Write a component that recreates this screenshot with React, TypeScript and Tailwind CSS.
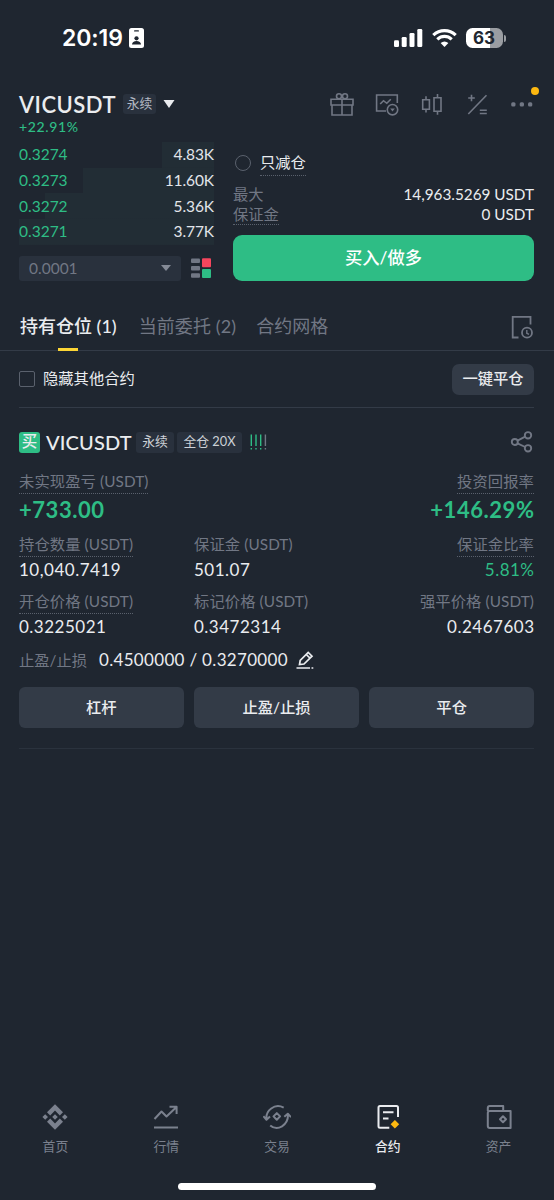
import { ReactNode } from "react";
import clsx from "clsx";

const asks = [
    { price: "0.3274", amount: "4.83K", depth: 52 },
    { price: "0.3273", amount: "11.60K", depth: 131 },
    { price: "0.3272", amount: "5.36K", depth: 169 },
    { price: "0.3271", amount: "3.77K", depth: 195 },
];

const Icon = ({ children, className = "size-6", box = "0 0 24 24" }: { children: ReactNode; className?: string; box?: string }) => (
    <svg viewBox={box} className={className} fill="none" stroke="currentColor" strokeWidth="1.6">
        {children}
    </svg>
);

const StatusBar = () => (
    <div className="flex h-[76px] items-center pl-[62px] pr-[48px] text-white">
        <div className="w-[62px] font-['Inter'] text-[23px] font-semibold leading-6 tracking-[-0.1px]">20:19</div>
        <svg viewBox="0 0 15 20" className="ml-[5px] h-5 w-[15px]">
            <rect width="15" height="20" rx="2.5" fill="#fff" />
            <rect x="5" y="2.2" width="5" height="1.4" rx="0.7" fill="#1f2630" />
            <circle cx="7.5" cy="10.3" r="2.1" fill="#1f2630" />
            <path d="M3 16.6c0-2.2 2-3.6 4.5-3.6s4.5 1.4 4.5 3.6z" fill="#1f2630" />
        </svg>
        <svg viewBox="0 0 29 18" className="ml-auto h-[18px] w-[29px]" fill="#fff">
            <rect y="11.3" width="5" height="6.7" rx="1.3" />
            <rect x="7.7" y="8" width="5" height="10" rx="1.3" />
            <rect x="15.5" y="4" width="5" height="14" rx="1.3" />
            <rect x="23.3" width="5" height="18" rx="1.3" />
        </svg>
        <svg viewBox="0 0 25 18" className="ml-[9px] h-[18px] w-[25px]" fill="none" stroke="#fff" strokeWidth="3.2">
            <path d="M1.3 6.1C7.7 0.1 17.3 0.1 23.7 6.1" />
            <path d="M5.3 10.3C9.5 6.4 15.5 6.4 19.7 10.3" />
            <path d="M12.5 18L8.6 14.1Q12.5 10.7 16.4 14.1Z" fill="#fff" stroke="none" />
        </svg>
        <div className="ml-[9px] flex h-5 w-[37px] items-center justify-center rounded-[6.5px] bg-[linear-gradient(90deg,#fff_64%,#9a9da2_64%)] font-['Inter'] text-[17px] font-bold leading-5 text-[#20262f]">
            63
        </div>
        <div className="ml-[1.5px] h-[7px] w-[2px] rounded-r-full bg-[#9a9da2]" />
    </div>
);

const HeaderIcons = () => (
    <div className="ml-auto flex gap-[21px] text-[#717784]">
        <Icon>
            <path d="M1 7.2H23V13H1ZM2 13V23H22V13M12 7V23" />
            <circle cx="9" cy="4.3" r="2.5" />
            <circle cx="15" cy="4.3" r="2.5" />
        </Icon>
        <Icon>
            <path d="M11 19H1.6V3H22.3V11M5.2 12L8.5 8.7L11.8 11.3L15.8 7.3" />
            <circle cx="17.5" cy="17.7" r="5.2" />
            <path d="M15.2 16.5H19.8L17.5 19.4Z" fill="currentColor" stroke="none" />
        </Icon>
        <Icon>
            <path d="M2.7 7.7H9.4V17.3H2.7ZM6 4.3V7.7M6 17.3V20.5M14 5.7H21V19.3H14ZM17.5 2V5.7M17.5 19.3V22.7" />
        </Icon>
        <Icon>
            <path d="M3.2 6H9.8M6.5 2.7V9.3M3.3 22L21.5 3.3M14.8 18.3H21.8M14.8 21.5H21.8" />
        </Icon>
        <div className="relative">
            <Icon>
                <g fill="currentColor" stroke="none">
                    <rect x="1.2" y="10.2" width="4.3" height="4.2" rx="1.5" />
                    <rect x="9.7" y="10.2" width="4.3" height="4.2" rx="1.5" />
                    <rect x="18" y="10.2" width="4.3" height="4.2" rx="1.5" />
                </g>
            </Icon>
            <span className="absolute -right-[5px] -top-[5px] size-2 rounded-full bg-[#fcb810]" />
        </div>
    </div>
);

const OrderBook = () => (
    <div className="w-[195px]">
        {asks.map((row) => (
            <div
                key={row.price}
                className="flex h-[25.7px] items-center justify-between bg-[linear-gradient(#222d35,#222d35)] bg-right bg-no-repeat text-[15.5px]"
                style={{ backgroundSize: `${row.depth}px 100%` }}
            >
                <span className="text-[#2ebd85]">{row.price}</span>
                <span className="tracking-[-0.1px] text-[#e2e5ea]">{row.amount}</span>
            </div>
        ))}
        <div className="mt-[11px] flex items-center">
            <div className="flex h-[25px] w-[162px] items-center justify-between rounded-[3px] bg-[#29313d] px-[10px] text-[15.5px] text-[#717784]">
                0.0001
                <svg viewBox="0 0 10 6" className="h-[6px] w-[10px]" fill="#848a96">
                    <path d="M0 0H10L5 6Z" />
                </svg>
            </div>
            <svg viewBox="0 0 20 20" className="ml-[10px] size-5" fill="#717784">
                <rect y="0.5" width="9" height="4.5" rx="1" />
                <rect y="8" width="9" height="4.5" rx="1" />
                <rect y="15.3" width="9" height="4.5" rx="1" />
                <rect x="11" y="0.2" width="9" height="9" rx="1" fill="#f6465d" />
                <rect x="11" y="11" width="9" height="9" rx="1" fill="#2ebd85" />
            </svg>
        </div>
    </div>
);

const OrderForm = () => (
    <div className="w-[301px]">
        <div className="flex h-[42px] items-center pl-[2px]">
            <span className="size-4 rounded-full border border-[#5a616d]" />
            <span className="mt-[2px] ml-[9px] h-[24px] border-b border-dotted border-[#5a616d] text-[15.3px] leading-[20px]">只减仓</span>
        </div>
        <div className="flex h-5 items-center justify-between text-[15.3px] leading-5">
            <span className="text-[#717784]">最大</span>
            <span>14,963.5269 USDT</span>
        </div>
        <div className="flex h-[21px] items-center justify-between text-[15.3px]">
            <span className="h-[20px] border-b border-dotted border-[#5a616d] leading-[19px] text-[#717784]">保证金</span>
            <span>0 USDT</span>
        </div>
        <div className="mt-[10px] flex h-[46px] items-center justify-center rounded-[9px] bg-[#2ebd85] text-[17.3px] font-medium text-white">
            买入/做多
        </div>
    </div>
);

const Tabs = () => (
    <div className="mt-[22px] flex h-12 items-center border-b border-[#333b47] px-5 text-[18px] text-[#717784]">
        <div className="relative flex h-full items-center font-medium text-[#eaecef]">
            持有仓位 (1)
            <span className="absolute -bottom-px left-1/2 h-[3px] w-5 -translate-x-1/2 bg-[#fcd535]" />
        </div>
        <div className="ml-[22px] tracking-[0.1px]">当前委托 (2)</div>
        <div className="ml-[20px]">合约网格</div>
        <Icon className="ml-auto size-6">
            <path d="M8.5 22.5H2.7V1.8H20.5V9.5" strokeWidth="1.8" />
            <circle cx="17" cy="17.7" r="5" strokeWidth="1.8" />
            <path d="M16.8 15V18.2L19 19.3" strokeWidth="1.4" />
        </Icon>
    </div>
);

const Stat = ({ label, value, dotted, right, green }: { label: string; value: string; dotted?: boolean; right?: boolean; green?: boolean }) => (
    <div className={clsx("flex flex-col", right ? "items-end" : "items-start")}>
        <div className={clsx("h-6 border-b border-dotted text-[15.3px] leading-[23px] tracking-[0.1px] text-[#717784]", dotted ? "border-[#5a616d]" : "border-transparent")}>
            {label}
        </div>
        <div className={clsx("h-6 text-[17px] leading-[25px] tracking-[0.5px]", right && "-mr-[0.5px]", green && "text-[#2ebd85]")}>{value}</div>
    </div>
);

const Position = () => (
    <div className="pl-[19px] pr-5">
        <div className="flex h-[57px] items-center border-b border-[#333b47] text-[15.3px]">
            <span className="size-4 rounded-[2px] border border-[#5a616d]" />
            <span className="-mt-px ml-[8px]">隐藏其他合约</span>
            <div className="ml-auto flex h-[31px] w-[82px] items-center justify-center rounded-[7px] bg-[#333b47] pb-px font-medium">一键平仓</div>
        </div>
        <div className="mt-5 flex h-7 items-center">
            <span className="flex size-[21px] items-center justify-center rounded-[3px] bg-[#2ebd85] text-[15.5px] font-medium">买</span>
            <span className="ml-[6px] w-[86px] text-[20px] font-medium tracking-[0.15px]">VICUSDT</span>
            <span className="ml-[4px] flex h-[21px] w-[38px] items-center justify-center rounded-[3px] bg-[#29313d] text-[12.8px] text-[#cdd1d7]">永续</span>
            <span className="ml-[3px] flex h-[21px] w-[65px] items-center justify-center rounded-[3px] bg-[#29313d] text-[12.8px] text-[#cdd1d7]">全仓 20X</span>
            <svg viewBox="0 0 17 16" className="ml-[7.5px] h-4 w-[17px]" strokeWidth="1.4" strokeDasharray="11.5 2 1.5">
                <path d="M1.3 0.5V15.5M6 0.5V15.5M10.7 0.5V15.5" stroke="#2ebd85" />
                <path d="M15.4 0.5V15.5" stroke="#717784" />
            </svg>
            <Icon className="ml-auto size-6 text-[#717784]">
                <g strokeWidth="1.9">
                    <circle cx="4.8" cy="12" r="3" />
                    <circle cx="18" cy="5.3" r="3.2" />
                    <circle cx="18" cy="18.3" r="3.2" />
                    <path d="M7.5 10.6L15.2 6.7M7.5 13.4L15.2 17" />
                </g>
            </Icon>
        </div>
        <div className="mt-[14px] flex justify-between text-[15.3px] tracking-[0.1px] text-[#717784]">
            <span className="h-6 border-b border-dotted border-[#5a616d] leading-[23px]">未实现盈亏 (USDT)</span>
            <span className="h-6 border-b border-dotted border-[#5a616d] leading-[23px]">投资回报率</span>
        </div>
        <div className="flex h-[30px] items-center justify-between text-[22px] font-bold tracking-[0.55px] text-[#2ebd85]">
            <span>+733.00</span>
            <span className="-mr-[0.5px]">+146.29%</span>
        </div>
        <div className="mt-[9px] grid grid-cols-[175px_175px_1fr] gap-y-[9px]">
            <Stat label="持仓数量 (USDT)" value="10,040.7419" dotted />
            <Stat label="保证金 (USDT)" value="501.07" />
            <Stat label="保证金比率" value="5.81%" dotted right green />
            <Stat label="开仓价格 (USDT)" value="0.3225021" dotted />
            <Stat label="标记价格 (USDT)" value="0.3472314" />
            <Stat label="强平价格 (USDT)" value="0.2467603" right />
        </div>
        <div className="mt-[10px] flex h-6 items-center">
            <span className="w-[80px] text-[15.3px] text-[#717784]">止盈/止损</span>
            <span className="text-[17px] tracking-[0.32px]">0.4500000 / 0.3270000</span>
            <Icon className="ml-[8px] h-[18px] w-[18px]" box="0 0 18 18">
                <path d="M3.5 13.5L4.2 9.5L12.2 1.5L16 5.2L8 13L3.5 13.5ZM10.3 3.5L14 7.2" strokeWidth="1.7" />
                <path d="M0.5 17H14M15.5 17H17.3" strokeWidth="1.7" />
            </Icon>
        </div>
        <div className="mt-[15px] grid h-[41px] grid-cols-3 gap-[10.5px] text-[15.3px] font-medium">
            {["杠杆", "止盈/止损", "平仓"].map((name) => (
                <div key={name} className="flex items-center justify-center rounded-[6px] bg-[#333b47]">
                    {name}
                </div>
            ))}
        </div>
        <hr className="mt-[20px] border-[#2a323d]" />
    </div>
);

const navItems = [
    {
        name: "首页",
        icon: (
            <g fill="currentColor" stroke="none">
                <path d="M14 1.2L22 9.2L18.8 12.4L14 7.6L9.2 12.4L6 9.2ZM14 26.8L22 18.8L18.8 15.6L14 20.4L9.2 15.6L6 18.8Z" />
                <path d="M14 11.2L16.8 14L14 16.8L11.2 14ZM4.2 11.2L7 14L4.2 16.8L1.4 14ZM23.8 11.2L26.6 14L23.8 16.8L21 14Z" />
            </g>
        ),
    },
    { name: "行情", icon: <path d="M2.5 16L9.5 8.5L14.5 13.5L24 4.5M17.5 3.7H24.6V11M2 24.5H26" /> },
    {
        name: "交易",
        icon: (
            <>
                <path d="M3.4 16.5C2.4 7.5 11.5 0 20.7 4.6M0.4 13.2L3.5 16.8L7 13.6M7.2 22.4C14.5 28.5 25.5 22.5 25 11.2M21.3 13.8L24.8 10.7L28 14.2" />
                <path d="M13.8 10.1L17.1 13.4L13.8 16.7L10.5 13.4Z" />
            </>
        ),
    },
    {
        name: "合约",
        icon: (
            <>
                <path d="M15.3 24.8H6A1.5 1.5 0 0 1 4.5 23.3V4.500A1.500 1.500 0 0 1 6 3H22.500A1.500 1.500 0 0 1 24 4.500V14M9 9.300H19.500M9 15.500H14.500" />
                <path d="M20.9 17L25.2 21.300L20.900 25.600L16.600 21.300Z" fill="#fcb810" stroke="none" />
            </>
        ),
    },
    {
        name: "资产",
        icon: (
            <>
                <path d="M2.8 8V5A2 2 0 0 1 4.800 3H18.200V8M2.800 10A2 2 0 0 1 4.800 8H25.600V25H4.800A2 2 0 0 1 2.800 23Z" />
                <path d="M18 13.300L21 16.300L18 19.300L15 16.300Z" />
            </>
        ),
    },
];

const BottomNav = () => (
    <div className="mt-auto pb-[10px]">
        <div className="grid grid-cols-5">
            {navItems.map((item) => (
                <div key={item.name} className={clsx("flex flex-col items-center", item.name === "合约" ? "font-medium text-[#eaecef]" : "text-[#7b818e]")}>
                    <svg viewBox="0 0 28 28" className="size-7" fill="none" stroke="currentColor" strokeWidth="2" strokeLinejoin="round">
                        {item.icon}
                    </svg>
                    <span className="mt-[6px] text-[12.8px] leading-[18px]">{item.name}</span>
                </div>
            ))}
        </div>
        <div className="mx-auto mt-[28px] h-[7px] w-[198px] rounded-full bg-white" />
    </div>
);

const App = () => {
    return (
        <div className="flex h-[1200px] w-[554px] flex-col overflow-hidden bg-[#1f2630] font-['Lato','Noto_Sans_CJK_SC',sans-serif] text-[#eaecef]">
            <StatusBar />
            <div className="mt-[14px] flex h-7 items-center pl-[19px] pr-5">
                <span className="w-[98px] text-[22px] font-semibold tracking-[0.5px]">VICUSDT</span>
                <span className="ml-[6px] flex h-5 w-[33px] items-center justify-center rounded-[3px] bg-[#29313d] text-[12.8px] text-[#b3b9c3]">永续</span>
                <svg viewBox="0 0 12 8" className="ml-[7px] h-2 w-3" fill="#eaecef">
                    <path d="M0.5 0H11.5L6 8Z" />
                </svg>
                <HeaderIcons />
            </div>
            <div className="h-[17px] pl-[19px] text-[14px] font-medium leading-[17px] tracking-[0.65px] text-[#2ebd85]">+22.91%</div>
            <div className="mt-[7px] flex justify-between pl-[19px] pr-5">
                <OrderBook />
                <OrderForm />
            </div>
            <Tabs />
            <Position />
            <BottomNav />
        </div>
    );
};

export default App;
